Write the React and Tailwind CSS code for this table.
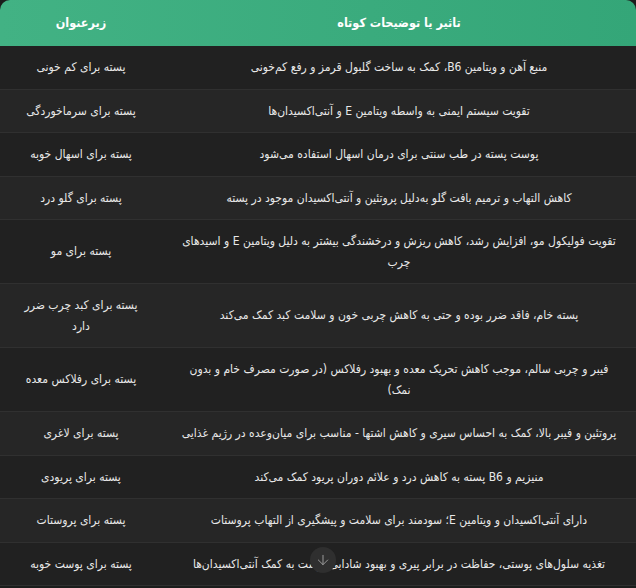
import { ArrowDown } from 'lucide-react'

const rows = [
  ['منبع آهن و ویتامین B6، کمک به ساخت گلبول قرمز و رفع کم‌خونی', 'پسته برای کم خونی'],
  ['تقویت سیستم ایمنی به واسطه ویتامین E و آنتی‌اکسیدان‌ها', 'پسته برای سرماخوردگی'],
  ['پوست پسته در طب سنتی برای درمان اسهال استفاده می‌شود', 'پسته برای اسهال خوبه'],
  ['کاهش التهاب و ترمیم بافت گلو به‌دلیل پروتئین و آنتی‌اکسیدان موجود در پسته', 'پسته برای گلو درد'],
  ['تقویت فولیکول مو، افزایش رشد، کاهش ریزش و درخشندگی بیشتر به دلیل ویتامین E و اسیدهای چرب', 'پسته برای مو'],
  ['پسته خام، فاقد ضرر بوده و حتی به کاهش چربی خون و سلامت کبد کمک می‌کند', 'پسته برای کبد چرب ضرر دارد'],
  ['فیبر و چربی سالم، موجب کاهش تحریک معده و بهبود رفلاکس (در صورت مصرف خام و بدون نمک)', 'پسته برای رفلاکس معده'],
  ['پروتئین و فیبر بالا، کمک به احساس سیری و کاهش اشتها - مناسب برای میان‌وعده در رژیم غذایی', 'پسته برای لاغری'],
  ['منیزیم و B6 پسته به کاهش درد و علائم دوران پریود کمک می‌کند', 'پسته برای پریودی'],
  ['دارای آنتی‌اکسیدان و ویتامین E؛ سودمند برای سلامت و پیشگیری از التهاب پروستات', 'پسته برای پروستات'],
  ['تغذیه سلول‌های پوستی، حفاظت در برابر پیری و بهبود شادابی پوست به کمک آنتی‌اکسیدان‌ها', 'پسته برای پوست خوبه'],
]

export default function App() {
  return (
    <div className="relative min-h-[588px] bg-[#1b1d1c] font-['DejaVu_Sans_Condensed','DejaVu_Sans',sans-serif] text-[12px] text-[#e8e8e8]">
      <div className="overflow-hidden rounded-t-[10px]">
        <table dir="rtl" className="w-full table-fixed border-collapse">
          <colgroup>
            <col />
            <col className="w-[162px]" />
          </colgroup>
          <thead>
            <tr className="bg-gradient-to-l from-[#34a678] to-[#42b284] text-white">
              <th className="h-[46px] px-4 text-center text-[12.5px] font-bold">تاثیر یا توضیحات کوتاه</th>
              <th className="h-[46px] px-4 text-center text-[12.5px] font-bold">زیرعنوان</th>
            </tr>
          </thead>
          <tbody>
            {rows.map(([desc, title], i) => (
              <tr
                key={title}
                className={`border-b border-[#303030] ${i % 2 === 0 ? 'bg-[#212121]' : 'bg-[#262626]'}`}
              >
                <td className="px-[15.5px] py-[11px] text-center leading-[20.5px]">{desc}</td>
                <td className="px-4 py-[11px] text-center leading-[20.5px]">{title}</td>
              </tr>
            ))}
          </tbody>
        </table>
      </div>

      <button className="absolute left-[310px] top-[547px] flex h-[26px] w-[26px] items-center justify-center rounded-full bg-[#2f2f2f] text-[#9a9a9a]">
        <ArrowDown className="h-4 w-4" strokeWidth={1.5} />
      </button>
    </div>
  )
}
